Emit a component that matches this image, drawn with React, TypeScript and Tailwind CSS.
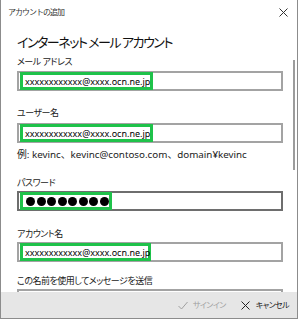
import React from "react";

const FONT = "[font-family:'Noto_Sans','Noto_Sans_CJK_JP',sans-serif]";

function Field({
  text,
  greenWidth,
  dark,
  password,
}: {
  text?: string;
  greenWidth: number;
  dark?: boolean;
  password?: boolean;
}) {
  return (
    <div
      className={`relative h-[20px] w-[266px] shrink-0 border-2 bg-white ${
        dark ? "border-[#6e6e6e]" : "border-[#a3a3a3]"
      }`}
    >
      <div
        className="absolute left-[1px] top-[-1px] flex h-[18px] items-center border-[3px] border-[#1fc24a] pl-[2px]"
        style={{ width: greenWidth }}
      >
        {password ? (
          <div className="flex items-center gap-[1.5px] pl-[1px]">
            {Array.from({ length: 8 }).map((_, i) => (
              <span key={i} className="block h-[9px] w-[9px] rounded-full bg-black" />
            ))}
          </div>
        ) : (
          <span className="text-[9px] leading-none text-black">{text}</span>
        )}
      </div>
    </div>
  );
}

function Label({ children, className = "" }: { children: React.ReactNode; className?: string }) {
  return (
    <div
      className={`h-[14px] shrink-0 text-[9px] leading-[14px] tracking-[-0.5px] text-[#1a1a1a] [font-feature-settings:'palt'] ${className}`}
    >
      {children}
    </div>
  );
}

export default function App() {
  return (
    <div
      className={`relative flex h-[319px] w-[298px] flex-col overflow-hidden border-x border-b border-[#8c8c8c] bg-white ${FONT}`}
    >
      {/* Title bar */}
      <div className="flex h-[24px] shrink-0 items-center justify-between pl-[7px] pr-[9px]">
        <span className="text-[8px] tracking-[-1px] text-[#333]">アカウントの追加</span>
        <svg width="9" height="9" viewBox="0 0 9 9" className="text-[#333]">
          <path d="M0.5 0.5 L8.5 8.5 M8.5 0.5 L0.5 8.5" stroke="currentColor" strokeWidth="1" />
        </svg>
      </div>

      {/* Content */}
      <div className="flex min-h-0 flex-1 flex-col overflow-hidden pl-[16px]">
        <div className="mt-[8px] h-[20px] shrink-0 text-[13px] leading-[20px] tracking-[-1.5px] text-[#111] [font-feature-settings:'palt']">
          インターネット メール アカウント
        </div>

        <Label className="mt-[3px]">メール アドレス</Label>
        <div className="h-[2px] shrink-0" />
        <Field text="xxxxxxxxxxxx@xxxx.ocn.ne.jp" greenWidth={133} />

        <Label className="mt-[15px]">ユーザー名</Label>
        <div className="h-[3px] shrink-0" />
        <Field text="xxxxxxxxxxxx@xxxx.ocn.ne.jp" greenWidth={133} />

        <div className="mt-[5px] h-[14px] shrink-0 text-[9.8px] leading-[14px] text-[#222]">
          例: kevinc、kevinc@contoso.com、domain¥kevinc
        </div>

        <Label className="mt-[14px]">パスワード</Label>
        <div className="h-[1px] shrink-0" />
        <Field greenWidth={92} dark password />

        <Label className="mt-[16px]">アカウント名</Label>
        <div className="h-[1px] shrink-0" />
        <Field text="xxxxxxxxxxxx@xxxx.ocn.ne.jp" greenWidth={131} />

        <Label className="mt-[12px]">この名前を使用してメッセージを送信</Label>
        <div className="mt-[1px] h-[20px] w-[266px] shrink-0 border-2 border-[#a3a3a3]" />
      </div>

      {/* Footer */}
      <div className="flex h-[26px] shrink-0 items-center justify-end bg-[#e6e6e6] pr-[8px] text-[8px] tracking-[-0.6px] [font-feature-settings:'palt']">
        <div className="flex items-center gap-[5px] text-[#a0a0a0]">
          <svg width="10" height="9" viewBox="0 0 10 9">
            <path d="M0.5 5 L3.5 8 L9.5 1" stroke="currentColor" strokeWidth="1" fill="none" />
          </svg>
          <span>サインイン</span>
        </div>
        <div className="ml-[15px] flex items-center gap-[6px] text-[#222]">
          <svg width="9" height="9" viewBox="0 0 9 9">
            <path d="M0.5 0.5 L8.5 8.5 M8.5 0.5 L0.5 8.5" stroke="currentColor" strokeWidth="1" />
          </svg>
          <span>キャンセル</span>
        </div>
      </div>

      {/* Scrollbar (overlay) */}
      <div className="absolute right-[2px] top-[60px] h-[110px] w-[2px] bg-[#9c9c9c]" />
    </div>
  );
}
